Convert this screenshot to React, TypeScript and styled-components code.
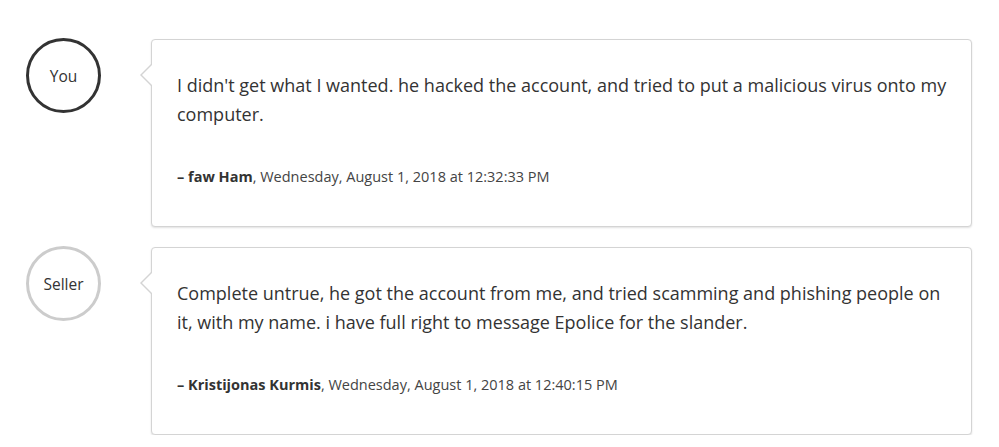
import React from "react";
import styled, { createGlobalStyle } from "styled-components";

const Global = createGlobalStyle`
  html, body { margin: 0; padding: 0; background: #fff; }
  body { font-family: "Open Sans", "Noto Sans", sans-serif; color: #333; }
`;

const Thread = styled.div`
  display: flex;
  flex-direction: column;
  gap: 19px;
  padding: 38px 27px 0 26px;
`;

const Row = styled.div`
  display: flex;
  align-items: flex-start;
  gap: 50px;
`;

const Avatar = styled.div<{ $self?: boolean }>`
  flex: none;
  width: 75px;
  height: 75px;
  box-sizing: border-box;
  border-radius: 50%;
  border: 3px solid ${(p) => (p.$self ? "#333" : "#ccc")};
  display: flex;
  align-items: center;
  justify-content: center;
  font-size: 15.5px;
  color: #333;
`;

const Card = styled.div`
  position: relative;
  flex: 1;
  margin-top: 1px;
  min-height: 188px;
  box-sizing: border-box;
  border: 1px solid #d4d4d4;
  border-radius: 4px;
  box-shadow: 0 1px 2px rgba(0, 0, 0, 0.12);
  background: #fff;
  padding: 31px 16px 20px 25px;

  &::before,
  &::after {
    content: "";
    position: absolute;
    top: 24px;
    width: 0;
    height: 0;
    border-style: solid;
    border-width: 11px 11px 11px 0;
  }
  &::before {
    left: -12px;
    border-color: transparent #d4d4d4 transparent transparent;
  }
  &::after {
    left: -10px;
    border-color: transparent #fff transparent transparent;
  }
`;

const Body = styled.p`
  margin: 0;
  font-size: 18px;
  line-height: 29px;
  color: #333;
`;

const Meta = styled.div`
  margin-top: 38px;
  font-size: 14.5px;
  color: #444;
`;

const Author = styled.strong`
  font-weight: 700;
  color: #333;
`;

const messages = [
  {
    who: "You",
    self: true,
    text: "I didn't get what I wanted. he hacked the account, and tried to put a malicious virus onto my computer.",
    author: "faw Ham",
    date: "Wednesday, August 1, 2018 at 12:32:33 PM",
  },
  {
    who: "Seller",
    self: false,
    text: "Complete untrue, he got the account from me, and tried scamming and phishing people on it, with my name. i have full right to message Epolice for the slander.",
    author: "Kristijonas Kurmis",
    date: "Wednesday, August 1, 2018 at 12:40:15 PM",
  },
];

export default function App() {
  return (
    <>
      <Global />
      <Thread>
        {messages.map((m) => (
          <Row key={m.author}>
            <Avatar $self={m.self}>{m.who}</Avatar>
            <Card>
              <Body>{m.text}</Body>
              <Meta>
                <Author>– {m.author}</Author>, {m.date}
              </Meta>
            </Card>
          </Row>
        ))}
      </Thread>
    </>
  );
}
